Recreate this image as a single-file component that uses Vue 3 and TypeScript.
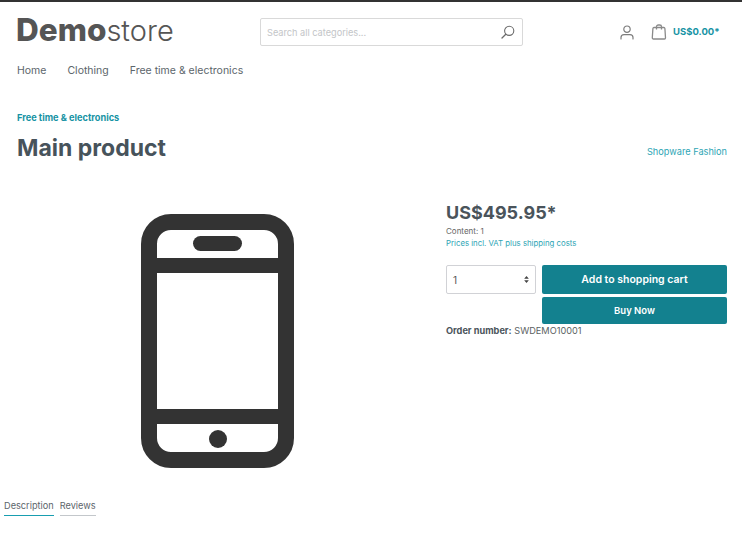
<script setup lang="ts">
const navItems = ['Home', 'Clothing', 'Free time & electronics']
const tabs = ['Description', 'Reviews']
</script>

<template>
  <div class="page">
    <header class="header">
      <div class="logo"><b>Demo</b>store</div>
      <div class="search">
        <span class="placeholder">Search all categories...</span>
        <svg class="search-icon" width="14" height="14" viewBox="0 0 14 14" fill="none">
          <circle cx="8.2" cy="5.8" r="4.6" stroke="#6b6b6b" stroke-width="1.1" />
          <path d="M4.8 9.2 1 13" stroke="#6b6b6b" stroke-width="1.3" stroke-linecap="round" />
        </svg>
      </div>
      <div class="actions">
        <svg class="user" width="14" height="15" viewBox="0 0 14 15" fill="none">
          <circle cx="7" cy="4.2" r="3.2" stroke="#7d7d7d" stroke-width="1.2" />
          <path d="M1 14v-1.5C1 10.5 2.5 9.6 4 9.6h6c1.500 0 3 .9 3 2.900V14" stroke="#7d7d7d" stroke-width="1.2" stroke-linecap="round" />
        </svg>
        <svg class="bag" width="16" height="16" viewBox="0 0 16 16" fill="none">
          <path d="M3 3.500h2.500M10.500 3.500h2.300c.6 0 1 .4 1.100 1l.6 9.300c0 .7-.4 1.200-1.100 1.200H2.400c-.7 0-1.100-.5-1.100-1.200l.6-9.300c.1-.6.500-1 1.100-1Z" stroke="#8a8a8a" stroke-width="1.300" />
          <path d="M5.500 5.500V2.600C5.500 1.500 6.300 1 7.300 1h1.400c1 0 1.800.5 1.800 1.600v2.900" stroke="#8a8a8a" stroke-width="1.300" />
        </svg>
        <span class="cart-total">US$0.00*</span>
      </div>
    </header>

    <nav class="nav">
      <a v-for="item in navItems" :key="item">{{ item }}</a>
    </nav>

    <section class="title-block">
      <a class="breadcrumb">Free time &amp; electronics</a>
      <div class="title-row">
        <h1>Main product</h1>
        <a class="manufacturer">Shopware Fashion</a>
      </div>
    </section>

    <main class="product">
      <div class="gallery">
        <svg width="153" height="254" viewBox="0 0 153 254">
          <rect x="8" y="8" width="137" height="238" rx="22" fill="none" stroke="#333" stroke-width="16" />
          <rect x="8" y="44" width="137" height="15" fill="#333" />
          <rect x="8" y="195" width="137" height="15" fill="#333" />
          <rect x="52" y="22" width="49" height="15" rx="7.500" fill="#333" />
          <circle cx="77" cy="225" r="9" fill="#333" />
        </svg>
      </div>
      <div class="buy">
        <div class="price">US$495.95*</div>
        <div class="content-line">Content: 1</div>
        <a class="tax">Prices incl. VAT plus shipping costs</a>
        <div class="buy-grid">
          <div class="qty">
            <span>1</span>
            <svg width="5" height="7" viewBox="0 0 6 9">
              <path d="M3 0 6 3.500H0Z M3 9 0 5.500H6Z" fill="#444" />
            </svg>
          </div>
          <div class="buttons">
            <button class="btn-cart">Add to shopping cart</button>
            <button class="btn-now">Buy Now</button>
          </div>
        </div>
        <div class="order"><b>Order number:</b> SWDEMO10001</div>
      </div>
    </main>

    <div class="tabs">
      <a v-for="(tab, i) in tabs" :key="tab" :class="{ active: i === 0 }">{{ tab }}</a>
    </div>
  </div>
</template>

<style>
body {
  background: #fff;
}
</style>

<style scoped>
.page {
  width: 742px;
  height: 539px;
  overflow: hidden;
  border-top: 2px solid #333;
  box-sizing: border-box;
  font-family: Inter, "Liberation Sans", sans-serif;
  color: #4a545b;
}

.header {
  display: flex;
  align-items: center;
  height: 28px;
  margin-top: 16px;
  padding-left: 16px;
}

.logo {
  width: 244px;
  margin-top: -4px;
  font-size: 29px;
  line-height: 28px;
  font-weight: 300;
  color: #555;
}

.logo b {
  font-size: 31.500px;
  font-weight: 800;
}

.search {
  display: flex;
  align-items: center;
  justify-content: space-between;
  box-sizing: border-box;
  width: 263px;
  height: 28px;
  padding: 0 7px 0 6px;
  border: 1px solid #d9d9d9;
  border-radius: 2px;
}

.placeholder {
  font-size: 9.200px;
  color: #c3c5c8;
}

.actions {
  display: flex;
  align-items: center;
  margin-left: 97px;
}

.user {
  margin-right: 17px;
}

.bag {
  margin-right: 6px;
}

.cart-total {
  margin-top: -1px;
  font-size: 9.500px;
  font-weight: 700;
  color: #1793a4;
}

.nav {
  display: flex;
  gap: 21px;
  margin-top: 18px;
  padding-left: 17px;
  font-size: 10.500px;
  line-height: 14px;
  color: #5c656b;
}

.title-block {
  margin-top: 34px;
  padding: 0 15px 0 17px;
}

.breadcrumb {
  display: block;
  font-size: 9.200px;
  line-height: 12px;
  font-weight: 700;
  color: #1793a4;
}

.title-row {
  display: flex;
  align-items: flex-end;
  justify-content: space-between;
  margin-top: 10px;
}

h1 {
  margin: 0;
  font-size: 23px;
  line-height: 28px;
  font-weight: 700;
  color: #47535b;
}

.manufacturer {
  font-size: 9.200px;
  line-height: 14px;
  margin-bottom: 3px;
  color: #2ea5b5;
}

.product {
  display: flex;
  margin-top: 39px;
}

.gallery {
  width: 446px;
  padding: 13px 0 0 141px;
  box-sizing: border-box;
}

.gallery svg {
  display: block;
}

.buy {
  width: 281px;
}

.price {
  font-size: 18px;
  line-height: 24px;
  font-weight: 700;
  color: #4a545b;
}

.content-line {
  margin-top: 0;
  font-size: 8px;
  line-height: 12px;
  color: #666;
}

.tax {
  display: block;
  font-size: 7.800px;
  line-height: 12px;
  color: #2ea5b5;
}

.buy-grid {
  display: flex;
  gap: 6px;
  margin-top: 16px;
}

.qty {
  display: flex;
  align-items: center;
  justify-content: space-between;
  box-sizing: border-box;
  width: 90px;
  height: 29px;
  padding: 0 6px 0 6px;
  border: 1px solid #d1d2d6;
  border-radius: 2px;
  font-size: 10px;
  color: #555;
}

.buttons {
  display: flex;
  flex-direction: column;
  flex: 1;
  gap: 3px;
}

button {
  display: block;
  width: 100%;
  border: 0;
  border-radius: 2px;
  background: #13818f;
  color: #fff;
  font-family: inherit;
  font-weight: 600;
  padding: 0;
}

.btn-cart {
  height: 29px;
  font-size: 10.500px;
}

.btn-now {
  height: 27px;
  font-size: 9.500px;
}

.order {
  margin-top: 1px;
  font-size: 9.200px;
  line-height: 12px;
  color: #5b5f63;
}

.order b {
  color: #4a545b;
}

.tabs {
  display: flex;
  gap: 6px;
  padding-left: 4px;
  margin-top: 32px;
  font-size: 9.200px;
  color: #5c656b;
}

.tabs a {
  padding-bottom: 3px;
  line-height: 12px;
  border-bottom: 1px solid #c3c7cb;
}

.tabs a.active {
  border-bottom-color: #189eb0;
}
</style>
